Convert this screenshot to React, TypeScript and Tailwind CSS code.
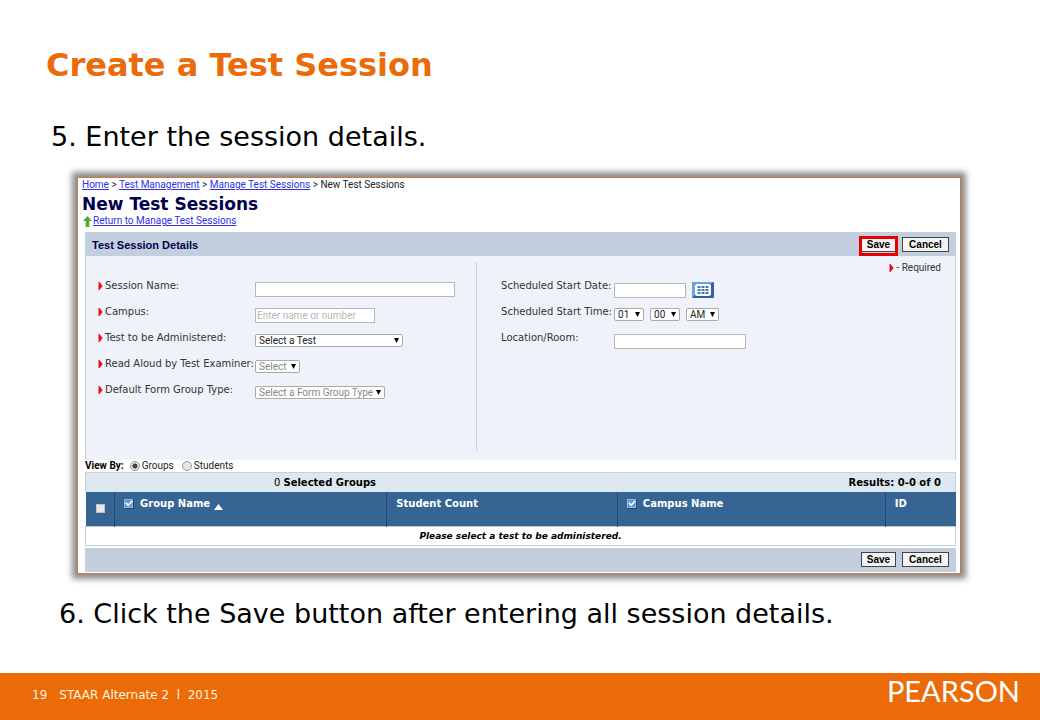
import { useState } from 'react';
import type { ReactNode } from 'react';
import clsx from 'clsx';

function RequiredMark() {
  return (
    <svg viewBox="0 0 5 8" className="h-2 w-[5px] shrink-0" aria-hidden="true">
      <path d="M0.5 0 H1.5 L4.6 4 L1.5 8 H0.5 Z" fill="#e0101c" />
    </svg>
  );
}

function CheckIcon() {
  return (
    <svg viewBox="0 0 10 10" className="size-[10px] shrink-0" aria-hidden="true">
      <rect width="10" height="10" fill="#1f4776" />
      <rect width="9" height="9" fill="#8fb9e6" />
      <rect x="1" y="1" width="7" height="7" fill="#5f95d0" />
      <path d="M1.8 3.6 L4.2 6.3 L8 2" fill="none" stroke="#fff" strokeWidth="1.6" />
    </svg>
  );
}

function CalendarIcon() {
  return (
    <svg viewBox="0 0 22 16" className="h-4 w-[22px]" aria-hidden="true">
      <rect width="22" height="16" rx="1" fill="#35609f" />
      <path d="M0 1 Q0 0 1 0 H21 L19 2 H3 V13 L0 16 Z" fill="#6ba3dc" />
      <rect x="3" y="2" width="16" height="12" rx="2" fill="#fff" />
      <path d="M5 4h3v2h-3z M9 4h3v2h-3z M13 4h3v2h-3z M5 7h3v2h-3z M9 7h3v2h-3z M13 7h3v2h-3z M5 10h3v2h-3z M9 10h3v2h-3z M13 10h3v2h-3z" fill="#4577b5" transform="translate(0.5 0)" />
    </svg>
  );
}

interface FieldProps {
  id: string;
  label: string;
  required?: boolean;
  children: ReactNode;
}

function Field({ id, label, required, children }: FieldProps) {
  return (
    <div className="flex h-[26px] items-start">
      <div className={clsx('flex shrink-0 items-center gap-0.5 pt-1.5', required ? 'w-[157px]' : 'w-[113px]')}>
        {required && <RequiredMark />}
        <label htmlFor={id} className="text-[10px] leading-3 whitespace-nowrap text-[#333]">{label}</label>
      </div>
      <div className="flex items-center gap-1.5 pt-2">{children}</div>
    </div>
  );
}

interface DropdownProps {
  id?: string;
  label?: string;
  text: string;
  width: string;
  muted?: boolean;
}

function Dropdown({ id, label, text, width, muted }: DropdownProps) {
  return (
    <span className={clsx('relative block', width)}>
      <select
        id={id}
        aria-label={label}
        className={clsx(
          'block h-[13px] w-full appearance-none rounded-xs border border-[#aaa] bg-white pl-[3px] font-[Roboto,sans-serif] text-[10px] leading-[11px]',
          muted ? 'text-[#888]' : 'text-[#222]',
        )}
      >
        <option>{text}</option>
      </select>
      <svg viewBox="0 0 5 5" className="pointer-events-none absolute top-1 right-1 size-[5px]" aria-hidden="true">
        <path d="M0 0 H5 L2.5 5 Z" fill="#000" />
      </svg>
    </span>
  );
}

const inputClass =
  'block h-[15px] border border-[#b5b8bd] bg-white px-px font-[Roboto,sans-serif] text-[10px] placeholder:text-[#b8b8b8]';

function Actions({ highlight }: { highlight?: boolean }) {
  const button =
    "block h-[15px] border border-[#444] bg-[#f4f4f4] text-center font-['Liberation_Sans',sans-serif] text-[10px] leading-3 font-bold text-black";
  return (
    <div className="flex gap-1.5">
      <span className="relative block">
        <button className={clsx(button, 'w-[35px]')}>Save</button>
        {highlight && <span className="pointer-events-none absolute -inset-x-0.5 -top-px -bottom-1 border-3 border-[#e60000]" />}
      </span>
      <button className={clsx(button, 'w-[47px]')}>Cancel</button>
    </div>
  );
}

function ViewBy() {
  const [view, setView] = useState('Groups');
  return (
    <div className="flex h-3 items-center font-[Roboto,sans-serif] text-[10px] leading-3 text-[#222]">
      <span className="mr-1.5 font-bold text-black">View By:</span>
      {['Groups', 'Students'].map((name) => (
        <label key={name} className="mr-2 flex items-center gap-0.5">
          <input
            type="radio"
            name="view"
            checked={view === name}
            onChange={() => setView(name)}
            className="size-[10px] appearance-none rounded-full border border-[#999] bg-[#e4e4e4] checked:bg-[radial-gradient(#444_40%,#e4e4e4_50%)]"
          />
          {name}
        </label>
      ))}
    </div>
  );
}

function GroupsTable() {
  const cell = 'border-l border-[#244b78] pt-1.5 pl-[9px] align-top';
  return (
    <table className="w-full table-fixed border-collapse text-[10px] leading-3">
      <thead>
        <tr className="h-[34px] bg-[#366594] text-left text-white">
          <th className="w-[29px] pt-3 pl-[10px] align-top">
            <input
              type="checkbox"
              aria-label="Select all"
              className="block size-[9px] appearance-none border border-[#c4c4c4] bg-[#e8e8e8]"
            />
          </th>
          <th className={clsx(cell, 'w-[31.3%]')}>
            <span className="flex items-center gap-1.5">
              <CheckIcon />
              <span className="flex items-end gap-1">
                Group Name
                <svg viewBox="0 0 9 6" className="h-1.5 w-[9px]" aria-hidden="true">
                  <path d="M4.5 0 L9 6 H0 Z" fill="#fff" />
                </svg>
              </span>
            </span>
          </th>
          <th className={clsx(cell, 'w-[26.5%]')}>Student Count</th>
          <th className={clsx(cell, 'w-[30.8%]')}>
            <span className="flex items-center gap-1.5">
              <CheckIcon />
              Campus Name
            </span>
          </th>
          <th className={cell}>ID</th>
        </tr>
      </thead>
      <tbody>
        <tr className="h-[19px] border border-[#c3cbd8]">
          <td colSpan={5} className="text-center text-[9px] font-bold text-black italic">
            Please select a test to be administered.
          </td>
        </tr>
      </tbody>
    </table>
  );
}

function SessionForm() {
  return (
    <section className="border border-b-0 border-[#c3cfdf] bg-[#eff3f9]">
      <div className="flex h-[23px] items-center justify-between bg-[#c3cfdf] px-1.5">
        <h3 className="font-['Liberation_Sans',sans-serif] text-[11px] leading-3 font-bold text-[#00004f]">Test Session Details</h3>
        <Actions highlight />
      </div>
      <div className="flex h-[204px] pt-1.5">
        <div className="h-[189px] w-[45%] border-r border-[#c5d0e0] pt-3 pl-3">
          <Field id="name" label="Session Name:" required>
            <input id="name" className={clsx(inputClass, 'w-[200px]')} />
          </Field>
          <Field id="campus" label="Campus:" required>
            <input id="campus" placeholder="Enter name or number" className={clsx(inputClass, 'w-[120px]')} />
          </Field>
          <Field id="test" label="Test to be Administered:" required>
            <Dropdown id="test" text="Select a Test" width="w-[148px]" />
          </Field>
          <Field id="aloud" label="Read Aloud by Test Examiner:" required>
            <Dropdown id="aloud" text="Select" width="w-[45px]" muted />
          </Field>
          <Field id="form" label="Default Form Group Type:" required>
            <Dropdown id="form" text="Select a Form Group Type" width="w-[130px]" muted />
          </Field>
        </div>
        <div className="flex-1 pl-6">
          <p className="flex h-3 items-center justify-end gap-0.5 pr-3.5 font-[Roboto,sans-serif] text-[10px] leading-3 text-[#333]">
            <RequiredMark />
            - Required
          </p>
          <Field id="date" label="Scheduled Start Date:">
            <input id="date" className={clsx(inputClass, 'w-[72px]')} />
            <button aria-label="Choose date" className="block">
              <CalendarIcon />
            </button>
          </Field>
          <Field id="hour" label="Scheduled Start Time:">
            <Dropdown id="hour" text="01" width="w-[30px]" />
            <Dropdown label="Minute" text="00" width="w-[30px]" />
            <Dropdown label="AM or PM" text="AM" width="w-[33px]" />
          </Field>
          <Field id="room" label="Location/Room:">
            <input id="room" className={clsx(inputClass, 'w-[132px]')} />
          </Field>
        </div>
      </div>
    </section>
  );
}

function SessionWindow() {
  return (
    <div className="border border-[#cd7a3c] bg-white pt-px pr-1 pb-px pl-1 shadow-[0_0_6px_5px_#8c8c8c]">
      <nav className="font-[Roboto,sans-serif] text-[10px] leading-3 text-[#222]">
        <a href="#home" className="text-[#2f2fe0] underline">Home</a> &gt;{' '}
        <a href="#management" className="text-[#2f2fe0] underline">Test Management</a> &gt;{' '}
        <a href="#sessions" className="text-[#2f2fe0] underline">Manage Test Sessions</a> &gt; New Test Sessions
      </nav>
      <h2 className="pt-0.5 text-[17px] leading-[22px] font-bold text-[#00004f]">New Test Sessions</h2>
      <a
        href="#sessions"
        className="flex items-center gap-px pl-px font-[Roboto,sans-serif] text-[10px] leading-3 text-[#2f2fe0] underline"
      >
        <svg viewBox="0 0 9 11" className="h-[11px] w-[9px]" aria-hidden="true">
          <path d="M4.5 0 L9 5 H6.3 V11 H2.7 V5 H0 Z" fill="#4cae2b" />
        </svg>
        Return to Manage Test Sessions
      </a>
      <div className="pt-[5px] pl-[3px]">
        <SessionForm />
        <ViewBy />
        <div className="flex h-5 items-center border border-b-0 border-[#c9d1da] bg-[#dde7ef] text-[10px] leading-3 text-black">
          <p className="w-[55%] text-center">
            0 <strong>Selected Groups</strong>
          </p>
          <p className="flex-1 pr-3.5 text-right font-bold">Results: 0-0 of 0</p>
        </div>
        <GroupsTable />
        <div className="mt-0.5 flex h-6 items-center justify-end bg-[#c3cfdf] pr-[7px]">
          <Actions />
        </div>
      </div>
    </div>
  );
}

export default function App() {
  return (
    <div className="flex min-h-screen flex-col bg-white font-['DejaVu_Sans',sans-serif]">
      <main className="flex-1">
        <h1 className="pt-[45px] pl-[46px] text-[32px] leading-10 font-bold text-[#eb6b0a]">Create a Test Session</h1>
        <p className="pt-[34px] pl-[51px] text-[27px] leading-9 text-black">5. Enter the session details.</p>
        <div className="pt-[22px] pr-[79px] pl-[77px]">
          <SessionWindow />
        </div>
        <p className="pt-[22px] pl-[59px] text-[27px] leading-9 text-black">6. Click the Save button after entering all session details.</p>
      </main>
      <footer className="flex h-[47px] items-center justify-between bg-[#eb6b08] pr-5 pl-8 text-[#fff3df]">
        <p className="flex gap-3 pb-1 text-[12px] leading-4">
          <span>19</span>
          <span className="whitespace-pre">STAAR Alternate 2  l  2015</span>
        </p>
        <span className="pb-3 font-['Lato',sans-serif] text-[29px] leading-8 text-white">PEARSON</span>
      </footer>
    </div>
  );
}
